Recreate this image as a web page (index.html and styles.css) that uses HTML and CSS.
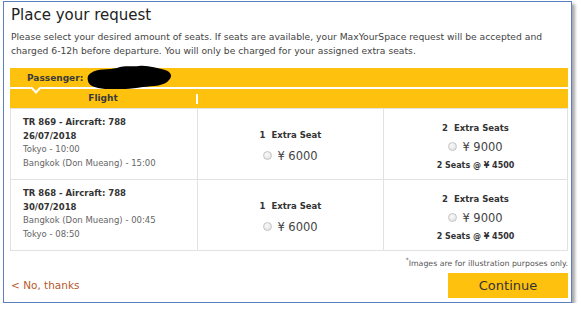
FILE: index.html
```html
<!DOCTYPE html>
<html>
<head>
  <title>Place your request</title>
  <link rel="stylesheet" href="styles.css">
</head>
<body>

  <div class="dialog">
    <h2 class="title">Place your request</h2>
    <p class="intro">Please select your desired amount of seats. If seats are available, your MaxYourSpace request will be accepted and charged 6-12h before departure. You will only be charged for your assigned extra seats.</p>

    <div class="passenger-bar">
      <span class="passenger-label">Passenger:</span>
      <svg class="redact" width="86" height="27" viewBox="0 0 86 27">
        <path d="M4 9 C10 4 22 6 30 4 C38 1 46 3 52 2 C60 1 70 4 78 6 C84 8 86 12 82 16 C78 22 66 22 56 23 C44 25 30 26 18 25 C8 24 2 22 1 17 C0 13 1 11 4 9 Z" fill="#000"/>
      </svg>
    </div>

    <div class="flight-bar">
      <div class="flight-head">Flight</div>
      <div class="flight-gap"></div>
      <div></div>
    </div>

    <div class="flights">
      <div class="flight-row">
        <div class="cell info">
          <b>TR 869 - Aircraft: 788</b>
          <b>26/07/2018</b>
          <span>Tokyo - 10:00</span>
          <span>Bangkok (Don Mueang) - 15:00</span>
        </div>
        <div class="cell option one">
          <b class="seats">1&nbsp; Extra Seat</b>
          <label class="price"><input type="radio" name="f1"> ¥ 6000</label>
        </div>
        <div class="cell option">
          <b class="seats">2&nbsp; Extra Seats</b>
          <label class="price"><input type="radio" name="f1"> ¥ 9000</label>
          <b class="each">2 Seats @ ¥ 4500</b>
        </div>
      </div>
      <div class="flight-row">
        <div class="cell info">
          <b>TR 868 - Aircraft: 788</b>
          <b>30/07/2018</b>
          <span>Bangkok (Don Mueang) - 00:45</span>
          <span>Tokyo - 08:50</span>
        </div>
        <div class="cell option one">
          <b class="seats">1&nbsp; Extra Seat</b>
          <label class="price"><input type="radio" name="f2"> ¥ 6000</label>
        </div>
        <div class="cell option">
          <b class="seats">2&nbsp; Extra Seats</b>
          <label class="price"><input type="radio" name="f2"> ¥ 9000</label>
          <b class="each">2 Seats @ ¥ 4500</b>
        </div>
      </div>
    </div>

    <p class="note"><sup>*</sup>Images are for illustration purposes only.</p>

    <div class="actions">
      <a class="decline" href="#">&lt; No, thanks</a>
      <button class="continue-btn">Continue</button>
    </div>
  </div>

</body>
</html>
```

FILE: styles.css
```css
body {
  margin: 0;
  font-family: "DejaVu Sans", Verdana, sans-serif;
  color: #444;
  background: #fff;
}

.dialog {
  box-sizing: border-box;
  width: 569px;
  height: 302px;
  margin: 1px 0 0 3px;
  padding: 0 3px 0 6px;
  border: 1px solid #5b7fbf;
  box-shadow: 3px 3px 3px rgba(0,0,0,0.35);
  background: #fff;
}

.title {
  margin: 0;
  padding: 3px 0 0 1px;
  font-size: 15px;
  font-weight: normal;
  line-height: 20px;
  color: #222;
}

.intro {
  margin: 5px 0 0 1px;
  font-size: 9.2px;
  line-height: 14px;
  color: #444;
}

.passenger-bar {
  position: relative;
  height: 19px;
  margin-top: 10px;
  background: #fec10e;
  display: flex;
  align-items: center;
  padding-left: 17px;
}

.passenger-label,
.flight-head {
  font-size: 9px;
  font-weight: bold;
  color: #3a3a3a;
}

.redact {
  position: absolute;
  left: 77px;
  top: -4px;
}

.flight-bar {
  position: relative;
  height: 19px;
  margin-top: 2px;
  background: #fec10e;
  display: grid;
  grid-template-columns: 186px 186px 1fr;
  align-items: center;
}

.flight-bar::before {
  content: "";
  position: absolute;
  left: 22px;
  top: -5px;
  width: 6px;
  height: 6px;
  background: #fec10e;
  border-right: 2px solid #fff;
  border-bottom: 2px solid #fff;
  transform: rotate(45deg);
}

.flight-head {
  text-align: center;
  line-height: 10px;
  margin-top: -2px;
}

.flight-gap {
  height: 10px;
  border-left: 2px solid #fff;
}

.flights {
  border: 1px solid #e2e2e2;
}

.flight-row {
  display: grid;
  grid-template-columns: 186px 186px 1fr;
  height: 70px;
}

.flight-row + .flight-row {
  border-top: 1px solid #e2e2e2;
}

.cell + .cell {
  border-left: 1px solid #e2e2e2;
}

.info {
  display: flex;
  flex-direction: column;
  padding: 7px 0 0 12px;
  font-size: 8.5px;
  line-height: 13.5px;
  color: #666;
}

.info b {
  color: #333;
}

.option {
  display: flex;
  flex-direction: column;
  align-items: center;
  justify-content: center;
  gap: 7px;
  padding-top: 4px;
}

.option.one {
  gap: 9px;
}

.seats,
.each {
  font-size: 8.5px;
  color: #333;
}

.each {
  font-size: 8px;
}

.price {
  display: flex;
  align-items: center;
  gap: 5px;
  font-size: 11.5px;
  color: #444;
}

.price input {
  appearance: none;
  margin: 0;
  width: 9px;
  height: 9px;
  border: 1px solid #c4c4c4;
  border-radius: 50%;
  background: radial-gradient(circle at 40% 35%, #fafafa, #dedede);
}

.note {
  margin: 5px 0 0;
  text-align: right;
  font-size: 7.8px;
  color: #555;
}

.note sup {
  font-size: 6px;
}

.actions {
  display: flex;
  justify-content: space-between;
  align-items: center;
  margin-top: 5px;
}

.decline {
  font-size: 10.5px;
  color: #b5592b;
  text-decoration: none;
  padding-left: 1px;
}

.continue-btn {
  width: 120px;
  height: 25px;
  border: none;
  background: #fec10e;
  color: #333;
  font-family: inherit;
  font-size: 13px;
}
```
